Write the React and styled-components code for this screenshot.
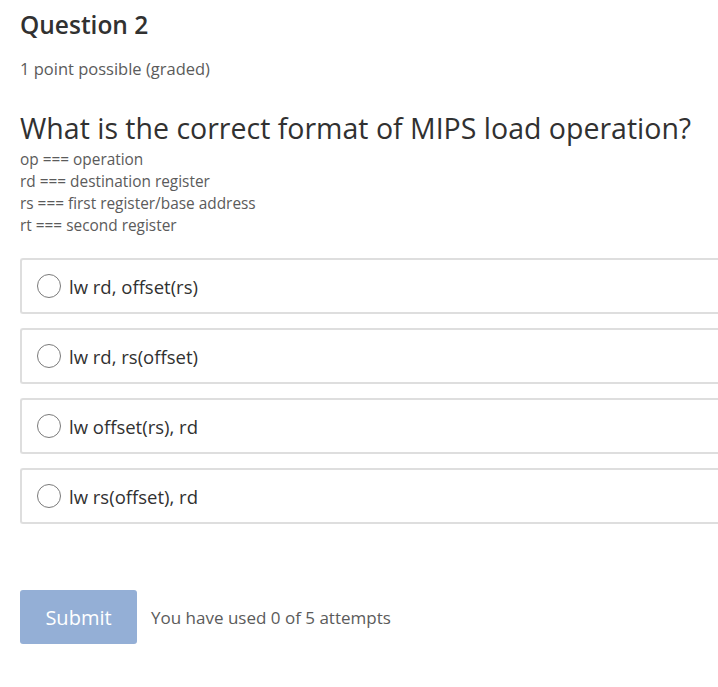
import React from 'react';
import styled, { createGlobalStyle } from 'styled-components';

const GlobalStyle = createGlobalStyle`
  html, body {
    margin: 0;
    padding: 0;
    background: #fff;
    overflow: hidden;
  }
  body {
    font-family: "Open Sans", "Noto Sans", sans-serif;
    color: #313131;
  }
`;

const Problem = styled.div`
  padding: 7px 0 0 20px;
`;

const Title = styled.h3`
  margin: 0;
  font-size: 24.5px;
  font-weight: 600;
  line-height: 36px;
  color: #313131;
`;

const Meta = styled.div`
  margin-top: 15px;
  font-size: 16.5px;
  line-height: 22px;
  color: #5b5b5b;
`;

const Prompt = styled.h2`
  margin: 29px 0 0;
  font-size: 28.5px;
  font-weight: 400;
  line-height: 38px;
  color: #313131;
`;

const Legend = styled.div`
  margin-top: 2px;
  font-size: 15.4px;
  line-height: 22px;
  color: #5b5b5b;
`;

const Choices = styled.div`
  display: flex;
  flex-direction: column;
  gap: 14px;
  margin-top: 21px;
  margin-right: -20px;
`;

const Choice = styled.label`
  display: flex;
  align-items: center;
  gap: 8px;
  height: 56px;
  box-sizing: border-box;
  padding-left: 15px;
  border: 2px solid #dedede;
  border-right: none;
  border-radius: 3px 0 0 3px;
  font-size: 18.5px;
  color: #313131;
  cursor: pointer;
`;

const Radio = styled.span`
  width: 24px;
  height: 24px;
  box-sizing: border-box;
  border: 1.5px solid #7a7a7a;
  border-radius: 50%;
  flex-shrink: 0;
`;

const Actions = styled.div`
  display: flex;
  align-items: center;
  gap: 14px;
  margin-top: 66px;
`;

const SubmitButton = styled.button`
  width: 117px;
  height: 54px;
  border: none;
  border-radius: 3px;
  background: #94afd6;
  color: #fff;
  font-family: inherit;
  font-size: 20px;
  padding: 0;
`;

const Attempts = styled.span`
  font-size: 17px;
  color: #5b5b5b;
`;

const choices = [
  'lw rd, offset(rs)',
  'lw rd, rs(offset)',
  'lw offset(rs), rd',
  'lw rs(offset), rd',
];

export default function App() {
  return (
    <>
      <GlobalStyle />
      <Problem>
        <Title>Question 2</Title>
        <Meta>1 point possible (graded)</Meta>
        <Prompt>What is the correct format of MIPS load operation?</Prompt>
        <Legend>
          <div>op === operation</div>
          <div>rd === destination register</div>
          <div>rs === first register/base address</div>
          <div>rt === second register</div>
        </Legend>
        <Choices>
          {choices.map((c) => (
            <Choice key={c}>
              <Radio />
              {c}
            </Choice>
          ))}
        </Choices>
        <Actions>
          <SubmitButton disabled>Submit</SubmitButton>
          <Attempts>You have used 0 of 5 attempts</Attempts>
        </Actions>
      </Problem>
    </>
  );
}
